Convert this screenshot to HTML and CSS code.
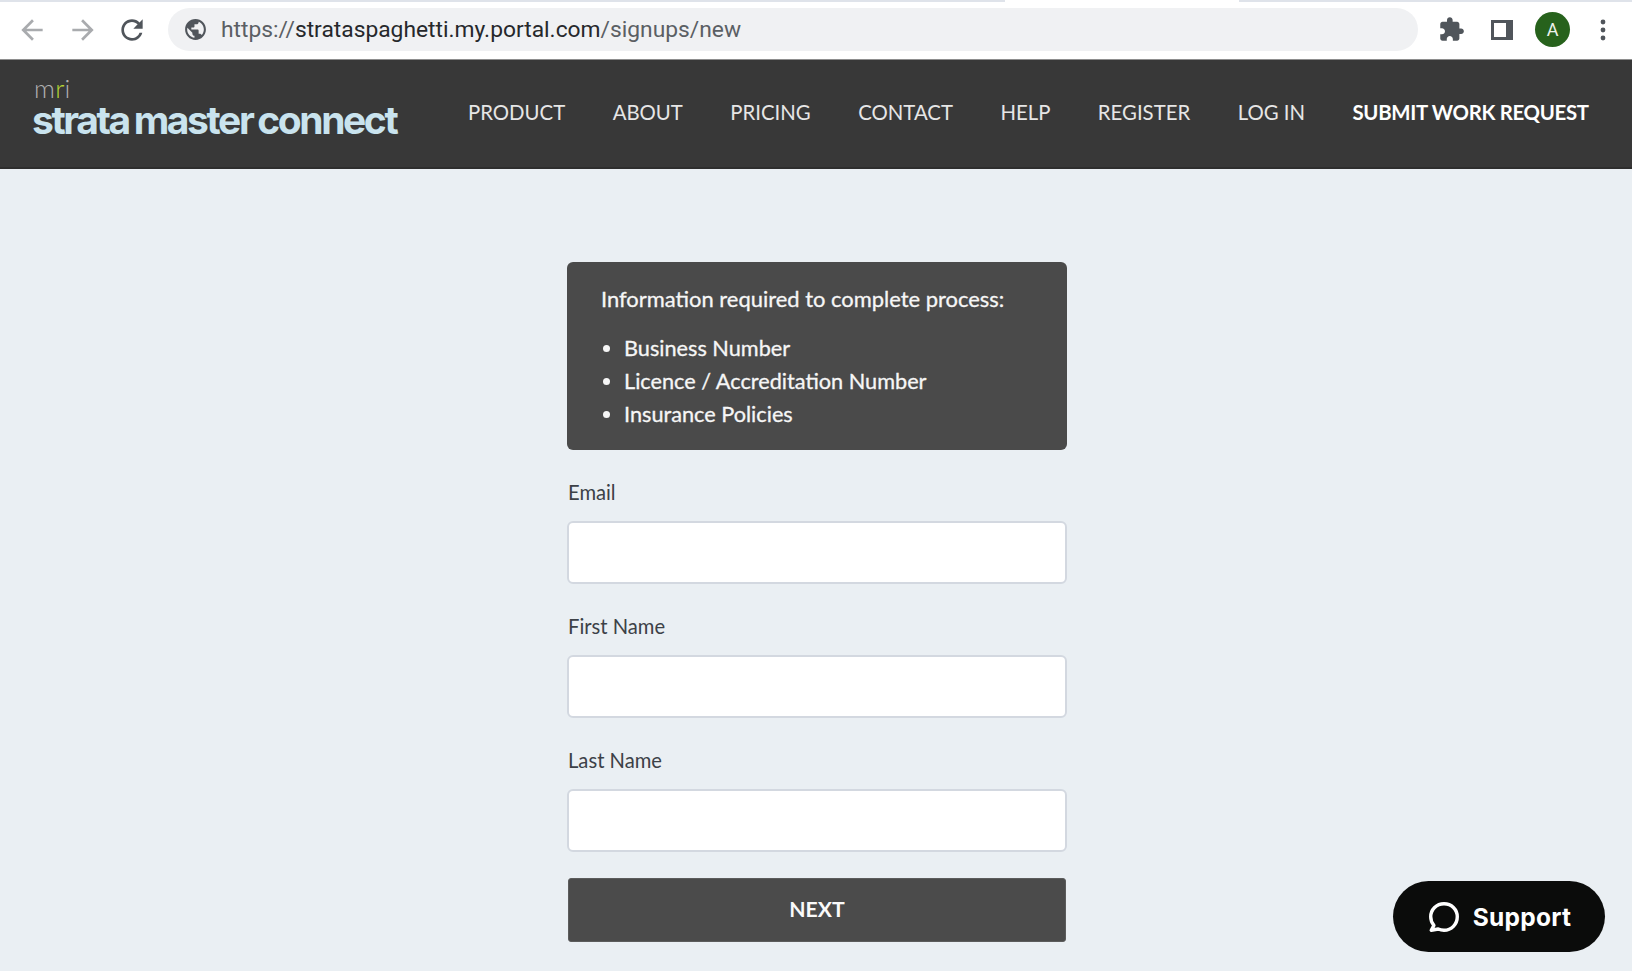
FILE: index.html
```html
<!DOCTYPE html>
<html lang="en">
<head>
<meta charset="utf-8">
<title>Strata Master Connect</title>
<link rel="stylesheet" href="styles.css">
</head>
<body>
<div class="chrome">
  <div class="tabstrip"><span class="strip-a"></span><span class="strip-b"></span><span class="strip-c"></span></div>
  <div class="toolbar">
    <svg class="tb-icon faded first" viewBox="0 0 24 24"><path d="M20 11H7.83l5.59-5.59L12 4l-8 8 8 8 1.41-1.41L7.83 13H20v-2z"/></svg>
    <svg class="tb-icon faded second" viewBox="0 0 24 24"><path d="M4 11h12.17l-5.59-5.59L12 4l8 8-8 8-1.41-1.41L16.17 13H4v-2z"/></svg>
    <svg class="tb-icon" viewBox="0 0 24 24"><path d="M17.65 6.35C16.2 4.9 14.21 4 12 4c-4.42 0-7.99 3.58-7.99 8s3.57 8 7.99 8c3.73 0 6.84-2.55 7.73-6h-2.08c-.82 2.33-3.04 4-5.65 4-3.31 0-6-2.69-6-6s2.69-6 6-6c1.66 0 3.14.69 4.22 1.78L13 11h7V4l-2.35 2.35z"/></svg>
    <div class="omnibox">
      <svg class="globe" viewBox="0 0 24 24"><path d="M12 2C6.48 2 2 6.48 2 12s4.48 10 10 10 10-4.48 10-10S17.52 2 12 2zm-1 17.93c-3.95-.49-7-3.85-7-7.93 0-.62.08-1.21.21-1.79L9 15v1c0 1.1.9 2 2 2v1.93zm6.9-2.54c-.26-.81-1-1.39-1.9-1.39h-1v-3c0-.55-.45-1-1-1H8v-2h2c.55 0 1-.45 1-1V7h2c1.1 0 2-.9 2-2v-.41c2.93 1.19 5 4.06 5 7.41 0 2.08-.8 3.97-2.1 5.39z"/></svg>
      <span class="url"><span class="url-dim">https://</span>strataspaghetti.my.portal.com<span class="url-dim">/signups/new</span></span>
    </div>
    <svg class="puzzle" viewBox="0 0 24 24"><path d="M20.5 11H19V7c0-1.1-.9-2-2-2h-4V3.5C13 2.12 11.88 1 10.5 1S8 2.12 8 3.5V5H4c-1.1 0-1.99.9-1.99 2v3.8H3.500c1.49 0 2.7 1.21 2.7 2.7s-1.21 2.7-2.7 2.7H2V20c0 1.1.9 2 2 2h3.8v-1.5c0-1.49 1.21-2.7 2.7-2.7 1.49 0 2.7 1.21 2.7 2.7V22H17c1.1 0 2-.9 2-2v-4h1.5c1.38 0 2.5-1.12 2.5-2.5S21.88 11 20.5 11z"/></svg>
    <svg class="panel" viewBox="0 0 22 22"><path fill-rule="evenodd" d="M0 1h22v20H0zM3 4v14h12V4z"/></svg>
    <div class="avatar">A</div>
    <svg class="kebab" viewBox="0 0 6 24"><circle cx="3" cy="4" r="2.4"/><circle cx="3" cy="12" r="2.4"/><circle cx="3" cy="20" r="2.4"/></svg>
  </div>
</div>

<header class="site-header">
  <a class="logo" href="#">
    <span class="logo-mri">m<span class="logo-r">r</span>i</span>
    <span class="logo-name">strata master connect</span>
  </a>
  <nav class="nav">
    <a href="#">PRODUCT</a>
    <a href="#">ABOUT</a>
    <a href="#">PRICING</a>
    <a href="#">CONTACT</a>
    <a href="#">HELP</a>
    <a href="#">REGISTER</a>
    <a href="#">LOG IN</a>
    <a class="nav-strong" href="#">SUBMIT WORK REQUEST</a>
  </nav>
</header>

<main class="content">
  <div class="column">
    <section class="info">
      <p class="info-title">Information required to complete process:</p>
      <ul class="info-list">
        <li>Business Number</li>
        <li>Licence / Accreditation Number</li>
        <li>Insurance Policies</li>
      </ul>
    </section>
    <form class="form">
      <label class="field"><span class="field-label">Email</span><input class="field-input" type="text"></label>
      <label class="field"><span class="field-label">First Name</span><input class="field-input" type="text"></label>
      <label class="field"><span class="field-label">Last Name</span><input class="field-input" type="text"></label>
      <button class="next" type="button">NEXT</button>
    </form>
  </div>
</main>

<button class="support" type="button">
  <svg class="support-icon" viewBox="0 0 32 32"><path d="M16 3.5C9 3.5 3.5 9 3.5 15.8c0 3.1 1.1 5.900 3 8.100L4 28.5l6.600-1.200c1.700.8 3.500 1.200 5.400 1.200 7 0 12.500-5.600 12.500-12.700S23 3.500 16 3.500z"/></svg>
  <span>Support</span>
</button>
</body>
</html>
```
FILE: styles.css
```css
* { box-sizing: border-box; }
html, body { margin: 0; padding: 0; }
body {
  width: 1632px;
  height: 971px;
  overflow: hidden;
  background: #eaeff3;
  font-family: Lato, "Liberation Sans", sans-serif;
  display: flex;
  flex-direction: column;
}

/* browser chrome */
.chrome { background: #fff; flex: none; }
.tabstrip { height: 2px; display: flex; background: #dfe3ea; }
.strip-a { width: 1005px; }
.strip-b { width: 234px; background: #fff; }
.strip-c { flex: 1; }
.toolbar {
  height: 58px;
  padding-top: 6px;
  padding-bottom: 8px;
  display: flex;
  align-items: center;
  border-bottom: 1px solid #8e8e8e;
}
.tb-icon { width: 32px; height: 32px; fill: #50555b; flex: none; }
.faded { fill: #a9abae; margin-right: 19px; }
.first { margin-left: 16px; }
.second { margin-right: 17px; }
.omnibox {
  margin-left: 20px;
  width: 1250px;
  height: 43px;
  border-radius: 22px;
  background: #f0f1f3;
  display: flex;
  align-items: center;
  padding-left: 15px;
  margin-right: 20px;
  flex: none;
}
.globe { width: 25px; height: 25px; fill: #50555b; flex: none; }
.url {
  margin-left: 13px;
  font-family: Roboto, sans-serif;
  font-size: 22.8px;
  color: #26282b;
}
.url-dim { color: #5b5f64; }
.puzzle { width: 27px; height: 27px; fill: #50555b; flex: none; }
.panel { width: 22px; height: 22px; margin-left: 26px; fill: #50555b; flex: none; }
.avatar {
  width: 35px;
  height: 35px;
  border-radius: 50%;
  background: #27621c;
  color: #eef3ec;
  margin-left: 22px;
  display: flex;
  align-items: center;
  justify-content: center;
  font-family: Roboto, sans-serif;
  font-size: 18px;
}
.kebab { width: 6px; height: 24px; fill: #50555b; margin-left: 30px; }

/* site header */
.site-header {
  flex: none;
  height: 109px;
  background: #383838;
  border-bottom: 2px solid #2e2e2e;
  display: flex;
  align-items: center;
  padding-left: 32px;
}
.logo { display: flex; flex-direction: column; text-decoration: none; width: 436px; flex: none; margin-top: -6px; }
.logo-mri {
  font-family: Lato, sans-serif;
  font-weight: 300;
  font-size: 26px;
  line-height: 19px;
  letter-spacing: .2px;
  color: #b0b0b0;
  padding-left: 2px;
}
.logo-r { color: #b4d334; }
.logo-name {
  font-family: Inter, sans-serif;
  font-weight: 700;
  font-size: 39px;
  line-height: 44px;
  letter-spacing: -2.4px;
  word-spacing: -2px;
  color: #c9e3ee;
  white-space: nowrap;
}
.nav { display: flex; gap: 47.5px; margin-top: -3px; }
.nav a {
  color: #e6e6e6;
  text-decoration: none;
  font-size: 20.35px;
  white-space: nowrap;
}
.nav .nav-strong { color: #fff; font-weight: 700; letter-spacing: -.3px; }

/* main */
.content { flex: 1; display: flex; justify-content: center; padding-top: 93px; }
.column { width: 500px; margin-left: 2px; }
.info {
  height: 188px;
  background: #4a4a4a;
  border-radius: 6px;
  color: #f6f6f6;
  padding: 21px 34px 0;
  font-size: 21.7px;
}
.info-title { margin: 0; line-height: 32px; font-size: 21.93px; -webkit-text-stroke: .3px #f6f6f6; }
.info-list { margin: 17px 0 0; padding: 0 0 0 23px; list-style: disc; -webkit-text-stroke: .3px #f6f6f6; }
.info-list li { line-height: 32.8px; }

.form { display: block; }
.field { display: block; }
.field-label {
  display: block;
  margin-top: 29px;
  padding-left: 1px;
  height: 26px;
  line-height: 26px;
  font-size: 20.2px;
  color: #3c4147;
}
.field:first-child .field-label { margin-top: 29px; }
.field-input {
  display: block;
  width: 100%;
  height: 63px;
  margin-top: 16px;
  background: #fff;
  border: 2px solid #d3d8e0;
  border-radius: 6px;
  outline: none;
}
.next {
  display: block;
  width: 498px;
  height: 64px;
  margin: 26px 1px 0;
  padding-bottom: 3px;
  background: #4b4b4b;
  border: 1px solid #5c5c5c;
  border-radius: 3px;
  color: #fafafa;
  font-family: Lato, sans-serif;
  font-weight: 700;
  font-size: 21.2px;
}

/* support */
.support {
  position: absolute;
  left: 1393px;
  top: 881px;
  width: 212px;
  height: 71px;
  border: 0;
  border-radius: 36px;
  background: #0b0c0b;
  color: #fff;
  display: flex;
  align-items: center;
  justify-content: center;
  gap: 12px;
  font-family: Inter, sans-serif;
  font-weight: 700;
  font-size: 24.5px;
  letter-spacing: .3px;
}
.support-icon { width: 34px; height: 34px; fill: none; stroke: #fff; stroke-width: 3.2; stroke-linejoin: round; }
```
